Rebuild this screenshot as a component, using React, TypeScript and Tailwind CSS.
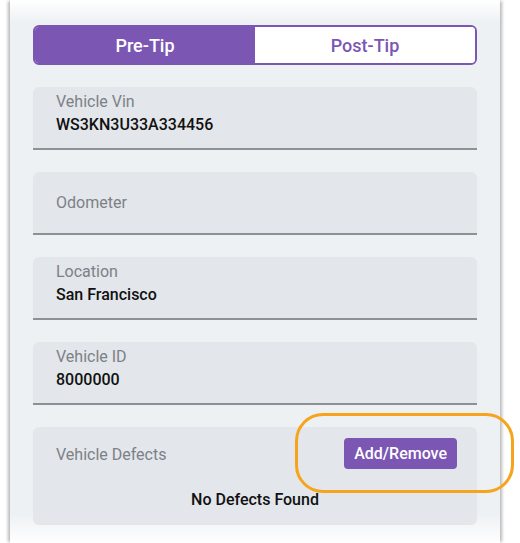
export default function App() {
  const fields = [
    { label: "Vehicle Vin", value: "WS3KN3U33A334456" },
    { label: "Odometer", value: "" },
    { label: "Location", value: "San Francisco" },
    { label: "Vehicle ID", value: "8000000" },
  ];

  return (
    <div
      className="w-[520px] h-[543px] bg-white overflow-hidden"
      style={{ fontFamily: "Roboto, 'Noto Sans', sans-serif" }}
    >
      <div className="relative ml-[10px] w-[490px] h-[543px] bg-[linear-gradient(to_bottom,#ffffff_0px,#eef1f4_22px,#eef1f4_515px,#ffffff_543px)] shadow-[-3px_0_3px_-1px_rgba(0,0,0,0.28),3px_0_3px_-1px_rgba(0,0,0,0.28)] px-[23px] pt-[25px]">
        {/* TABS */}
        <div className="flex h-[40px] rounded-[6px] overflow-hidden border-2 border-[#7b56b3]">
          <div className="flex-1 bg-[#7b56b3] text-white flex items-center justify-center text-[18px] font-medium">
            Pre-Tip
          </div>
          <div className="flex-1 bg-white text-[#7b56b3] flex items-center justify-center text-[18px] font-medium">
            Post-Tip
          </div>
        </div>

        {/* FIELDS */}
        <div className="mt-[22px] flex flex-col gap-[22px]">
          {fields.map((f) => (
            <div
              key={f.label}
              className={
                "h-[63px] bg-[#e3e6ea] rounded-t-[6px] border-b-2 border-[#8d9094] px-[23px] flex flex-col " +
                (f.value ? "pt-[5px]" : "justify-center")
              }
            >
              <div className="text-[16px] text-[#7c8188] leading-[20px]">
                {f.label}
              </div>
              {f.value && (
                <div className="text-[16px] text-[#111] font-medium leading-[26px]">
                  {f.value}
                </div>
              )}
            </div>
          ))}

          {/* DEFECTS */}
          <div className="h-[98px] bg-[#e3e6ea] rounded-[6px] px-[23px] pt-[11px]">
            <div className="flex items-center justify-between">
              <div className="text-[16px] text-[#7c8188] mt-[3px]">Vehicle Defects</div>
              <div className="bg-[#7b56b3] text-white text-[16px] font-medium rounded-[4px] px-[10px] h-[31px] flex items-center mr-[-3px]">
                Add/Remove
              </div>
            </div>
            <div className="mt-[19px] text-center text-[16px] font-medium text-[#111]">
              No Defects Found
            </div>
          </div>
        </div>

        {/* HIGHLIGHT */}
        <div className="absolute left-[285px] top-[413px] w-[219px] h-[80px] rounded-[28px] border-[3px] border-[#f5a41c]" />
      </div>
    </div>
  );
}
